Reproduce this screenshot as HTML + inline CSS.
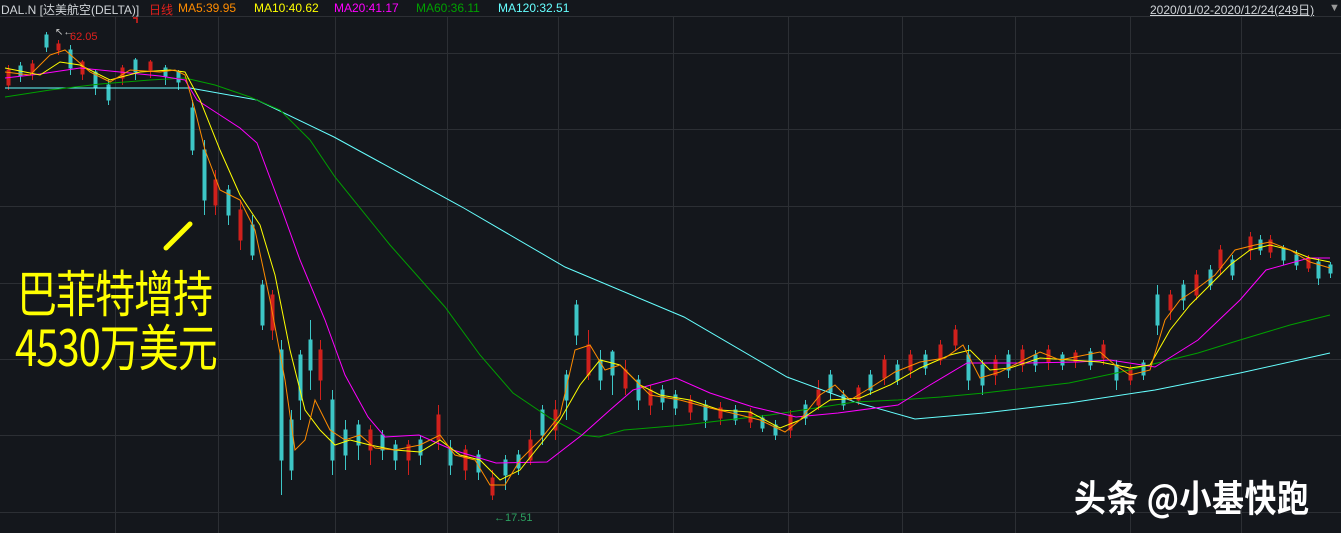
<!DOCTYPE html>
<html><head><meta charset="utf-8">
<style>
html,body{margin:0;padding:0;background:#14171c;width:1341px;height:533px;overflow:hidden;font-family:"Liberation Sans","Noto Sans CJK SC",sans-serif;}
#wrap{position:relative;width:1341px;height:533px;}
.hdr{position:absolute;top:1px;font-size:12px;white-space:nowrap;}
.big{position:absolute;color:#ffff00;font-family:"Noto Sans CJK SC",sans-serif;font-size:40px;line-height:44px;letter-spacing:-1px;transform:scaleY(1.25);transform-origin:0 0;}
.wm{position:absolute;left:1074px;top:470px;color:#fff;font-family:"Noto Sans CJK SC",sans-serif;font-weight:bold;font-size:32px;letter-spacing:0.5px;transform:scaleY(1.15);transform-origin:0 0;white-space:nowrap;}
svg .c{stroke:#3dc6c6;fill:#3dc6c6}
svg .r{stroke:#d0201c;fill:#d0201c}
</style></head><body>
<div id="wrap">
<svg width="1341" height="533" style="position:absolute;left:0;top:0">
<g stroke="#2c2f34" stroke-width="1">
<line x1="0" y1="16.5" x2="1341" y2="16.5"/>
<line x1="0" y1="53.5" x2="1341" y2="53.5"/><line x1="0" y1="129.5" x2="1341" y2="129.5"/><line x1="0" y1="206.5" x2="1341" y2="206.5"/><line x1="0" y1="283.5" x2="1341" y2="283.5"/><line x1="0" y1="359.5" x2="1341" y2="359.5"/><line x1="0" y1="435.5" x2="1341" y2="435.5"/><line x1="0" y1="512.5" x2="1341" y2="512.5"/>
<line x1="115.5" y1="17" x2="115.5" y2="533"/><line x1="218.5" y1="17" x2="218.5" y2="533"/><line x1="335.5" y1="17" x2="335.5" y2="533"/><line x1="447.5" y1="17" x2="447.5" y2="533"/><line x1="558.5" y1="17" x2="558.5" y2="533"/><line x1="673.5" y1="17" x2="673.5" y2="533"/><line x1="788.5" y1="17" x2="788.5" y2="533"/><line x1="902.5" y1="17" x2="902.5" y2="533"/><line x1="1015.5" y1="17" x2="1015.5" y2="533"/><line x1="1130.5" y1="17" x2="1130.5" y2="533"/><line x1="1241.5" y1="17" x2="1241.5" y2="533"/>
</g>
<g stroke-width="1">
<g class="r"><line x1="8.5" y1="65" x2="8.5" y2="90"/><rect x="7" y="70" width="3" height="15"/></g>
<g class="c"><line x1="20.5" y1="62" x2="20.5" y2="82"/><rect x="19" y="66" width="3" height="10"/></g>
<g class="r"><line x1="32.5" y1="60" x2="32.5" y2="80"/><rect x="31" y="64" width="3" height="8"/></g>
<g class="c"><line x1="46.5" y1="32" x2="46.5" y2="52"/><rect x="45" y="35" width="3" height="12"/></g>
<g class="r"><line x1="58.5" y1="40" x2="58.5" y2="55"/><rect x="57" y="44" width="3" height="6"/></g>
<g class="c"><line x1="70.5" y1="45" x2="70.5" y2="75"/><rect x="69" y="50" width="3" height="18"/></g>
<g class="r"><line x1="82.5" y1="60" x2="82.5" y2="80"/><rect x="81" y="62" width="3" height="12"/></g>
<g class="c"><line x1="95.5" y1="70" x2="95.5" y2="95"/><rect x="94" y="72" width="3" height="16"/></g>
<g class="c"><line x1="108.5" y1="80" x2="108.5" y2="105"/><rect x="107" y="85" width="3" height="15"/></g>
<g class="r"><line x1="122.5" y1="65" x2="122.5" y2="85"/><rect x="121" y="68" width="3" height="10"/></g>
<g class="c"><line x1="135.5" y1="58" x2="135.5" y2="80"/><rect x="134" y="60" width="3" height="12"/></g>
<g class="r"><line x1="150.5" y1="60" x2="150.5" y2="78"/><rect x="149" y="62" width="3" height="8"/></g>
<g class="c"><line x1="165.5" y1="65" x2="165.5" y2="85"/><rect x="164" y="68" width="3" height="8"/></g>
<g class="c"><line x1="178.5" y1="70" x2="178.5" y2="90"/><rect x="177" y="72" width="3" height="10"/></g>
<g class="c"><line x1="192.5" y1="100" x2="192.5" y2="155"/><rect x="191" y="108" width="3" height="42"/></g>
<g class="c"><line x1="204.5" y1="140" x2="204.5" y2="215"/><rect x="203" y="150" width="3" height="50"/></g>
<g class="r"><line x1="215.5" y1="170" x2="215.5" y2="215"/><rect x="214" y="180" width="3" height="25"/></g>
<g class="c"><line x1="228.5" y1="185" x2="228.5" y2="225"/><rect x="227" y="190" width="3" height="25"/></g>
<g class="r"><line x1="240.5" y1="200" x2="240.5" y2="250"/><rect x="239" y="210" width="3" height="30"/></g>
<g class="c"><line x1="252.5" y1="215" x2="252.5" y2="260"/><rect x="251" y="225" width="3" height="30"/></g>
<g class="c"><line x1="262.5" y1="280" x2="262.5" y2="330"/><rect x="261" y="285" width="3" height="40"/></g>
<g class="r"><line x1="272.5" y1="290" x2="272.5" y2="340"/><rect x="271" y="295" width="3" height="35"/></g>
<g class="c"><line x1="281.5" y1="340" x2="281.5" y2="495"/><rect x="280" y="350" width="3" height="110"/></g>
<g class="c"><line x1="291.5" y1="410" x2="291.5" y2="480"/><rect x="290" y="420" width="3" height="50"/></g>
<g class="c"><line x1="300.5" y1="350" x2="300.5" y2="420"/><rect x="299" y="355" width="3" height="45"/></g>
<g class="c"><line x1="310.5" y1="320" x2="310.5" y2="390"/><rect x="309" y="340" width="3" height="30"/></g>
<g class="r"><line x1="320.5" y1="340" x2="320.5" y2="400"/><rect x="319" y="350" width="3" height="30"/></g>
<g class="c"><line x1="332.5" y1="390" x2="332.5" y2="475"/><rect x="331" y="400" width="3" height="60"/></g>
<g class="c"><line x1="345.5" y1="420" x2="345.5" y2="470"/><rect x="344" y="430" width="3" height="25"/></g>
<g class="c"><line x1="358.5" y1="420" x2="358.5" y2="460"/><rect x="357" y="425" width="3" height="20"/></g>
<g class="r"><line x1="370.5" y1="425" x2="370.5" y2="465"/><rect x="369" y="430" width="3" height="20"/></g>
<g class="c"><line x1="382.5" y1="430" x2="382.5" y2="460"/><rect x="381" y="435" width="3" height="15"/></g>
<g class="c"><line x1="395.5" y1="440" x2="395.5" y2="470"/><rect x="394" y="445" width="3" height="15"/></g>
<g class="r"><line x1="408.5" y1="440" x2="408.5" y2="475"/><rect x="407" y="445" width="3" height="15"/></g>
<g class="c"><line x1="420.5" y1="435" x2="420.5" y2="465"/><rect x="419" y="440" width="3" height="15"/></g>
<g class="r"><line x1="438.5" y1="405" x2="438.5" y2="450"/><rect x="437" y="415" width="3" height="25"/></g>
<g class="c"><line x1="450.5" y1="440" x2="450.5" y2="475"/><rect x="449" y="448" width="3" height="17"/></g>
<g class="r"><line x1="465.5" y1="445" x2="465.5" y2="480"/><rect x="464" y="450" width="3" height="20"/></g>
<g class="c"><line x1="478.5" y1="450" x2="478.5" y2="480"/><rect x="477" y="455" width="3" height="17"/></g>
<g class="r"><line x1="492.5" y1="470" x2="492.5" y2="500"/><rect x="491" y="478" width="3" height="17"/></g>
<g class="c"><line x1="505.5" y1="455" x2="505.5" y2="490"/><rect x="504" y="460" width="3" height="15"/></g>
<g class="c"><line x1="518.5" y1="450" x2="518.5" y2="475"/><rect x="517" y="455" width="3" height="13"/></g>
<g class="r"><line x1="530.5" y1="430" x2="530.5" y2="465"/><rect x="529" y="440" width="3" height="20"/></g>
<g class="c"><line x1="542.5" y1="405" x2="542.5" y2="445"/><rect x="541" y="410" width="3" height="25"/></g>
<g class="r"><line x1="555.5" y1="400" x2="555.5" y2="440"/><rect x="554" y="410" width="3" height="20"/></g>
<g class="c"><line x1="566.5" y1="370" x2="566.5" y2="420"/><rect x="565" y="375" width="3" height="25"/></g>
<g class="c"><line x1="576.5" y1="300" x2="576.5" y2="345"/><rect x="575" y="305" width="3" height="30"/></g>
<g class="r"><line x1="588.5" y1="330" x2="588.5" y2="380"/><rect x="587" y="345" width="3" height="30"/></g>
<g class="c"><line x1="600.5" y1="350" x2="600.5" y2="390"/><rect x="599" y="360" width="3" height="20"/></g>
<g class="c"><line x1="612.5" y1="350" x2="612.5" y2="395"/><rect x="611" y="352" width="3" height="23"/></g>
<g class="r"><line x1="625.5" y1="360" x2="625.5" y2="395"/><rect x="624" y="370" width="3" height="18"/></g>
<g class="c"><line x1="638.5" y1="375" x2="638.5" y2="410"/><rect x="637" y="380" width="3" height="20"/></g>
<g class="r"><line x1="650.5" y1="385" x2="650.5" y2="415"/><rect x="649" y="390" width="3" height="15"/></g>
<g class="c"><line x1="662.5" y1="385" x2="662.5" y2="410"/><rect x="661" y="390" width="3" height="12"/></g>
<g class="c"><line x1="675.5" y1="390" x2="675.5" y2="415"/><rect x="674" y="395" width="3" height="13"/></g>
<g class="r"><line x1="690.5" y1="395" x2="690.5" y2="420"/><rect x="689" y="400" width="3" height="12"/></g>
<g class="c"><line x1="705.5" y1="400" x2="705.5" y2="428"/><rect x="704" y="405" width="3" height="15"/></g>
<g class="r"><line x1="720.5" y1="402" x2="720.5" y2="425"/><rect x="719" y="408" width="3" height="10"/></g>
<g class="c"><line x1="735.5" y1="405" x2="735.5" y2="425"/><rect x="734" y="410" width="3" height="10"/></g>
<g class="r"><line x1="750.5" y1="408" x2="750.5" y2="428"/><rect x="749" y="412" width="3" height="10"/></g>
<g class="c"><line x1="762.5" y1="415" x2="762.5" y2="432"/><rect x="761" y="418" width="3" height="10"/></g>
<g class="c"><line x1="775.5" y1="420" x2="775.5" y2="440"/><rect x="774" y="425" width="3" height="10"/></g>
<g class="r"><line x1="790.5" y1="410" x2="790.5" y2="438"/><rect x="789" y="415" width="3" height="15"/></g>
<g class="c"><line x1="805.5" y1="400" x2="805.5" y2="425"/><rect x="804" y="405" width="3" height="13"/></g>
<g class="r"><line x1="818.5" y1="380" x2="818.5" y2="410"/><rect x="817" y="390" width="3" height="15"/></g>
<g class="c"><line x1="830.5" y1="370" x2="830.5" y2="400"/><rect x="829" y="375" width="3" height="17"/></g>
<g class="c"><line x1="843.5" y1="390" x2="843.5" y2="410"/><rect x="842" y="395" width="3" height="10"/></g>
<g class="r"><line x1="858.5" y1="385" x2="858.5" y2="405"/><rect x="857" y="388" width="3" height="12"/></g>
<g class="c"><line x1="870.5" y1="370" x2="870.5" y2="395"/><rect x="869" y="375" width="3" height="15"/></g>
<g class="r"><line x1="884.5" y1="355" x2="884.5" y2="385"/><rect x="883" y="360" width="3" height="18"/></g>
<g class="c"><line x1="897.5" y1="360" x2="897.5" y2="385"/><rect x="896" y="365" width="3" height="15"/></g>
<g class="r"><line x1="910.5" y1="350" x2="910.5" y2="378"/><rect x="909" y="355" width="3" height="15"/></g>
<g class="c"><line x1="925.5" y1="350" x2="925.5" y2="375"/><rect x="924" y="355" width="3" height="13"/></g>
<g class="r"><line x1="940.5" y1="340" x2="940.5" y2="365"/><rect x="939" y="345" width="3" height="15"/></g>
<g class="r"><line x1="955.5" y1="325" x2="955.5" y2="350"/><rect x="954" y="330" width="3" height="15"/></g>
<g class="c"><line x1="968.5" y1="345" x2="968.5" y2="390"/><rect x="967" y="355" width="3" height="25"/></g>
<g class="c"><line x1="982.5" y1="360" x2="982.5" y2="395"/><rect x="981" y="365" width="3" height="20"/></g>
<g class="r"><line x1="995.5" y1="355" x2="995.5" y2="385"/><rect x="994" y="360" width="3" height="15"/></g>
<g class="c"><line x1="1008.5" y1="350" x2="1008.5" y2="378"/><rect x="1007" y="355" width="3" height="15"/></g>
<g class="r"><line x1="1022.5" y1="345" x2="1022.5" y2="372"/><rect x="1021" y="350" width="3" height="15"/></g>
<g class="c"><line x1="1035.5" y1="350" x2="1035.5" y2="372"/><rect x="1034" y="355" width="3" height="10"/></g>
<g class="r"><line x1="1048.5" y1="345" x2="1048.5" y2="370"/><rect x="1047" y="350" width="3" height="12"/></g>
<g class="c"><line x1="1062.5" y1="352" x2="1062.5" y2="370"/><rect x="1061" y="355" width="3" height="10"/></g>
<g class="r"><line x1="1075.5" y1="350" x2="1075.5" y2="368"/><rect x="1074" y="353" width="3" height="9"/></g>
<g class="c"><line x1="1090.5" y1="348" x2="1090.5" y2="370"/><rect x="1089" y="352" width="3" height="13"/></g>
<g class="r"><line x1="1103.5" y1="340" x2="1103.5" y2="365"/><rect x="1102" y="345" width="3" height="13"/></g>
<g class="c"><line x1="1116.5" y1="360" x2="1116.5" y2="390"/><rect x="1115" y="365" width="3" height="15"/></g>
<g class="r"><line x1="1130.5" y1="365" x2="1130.5" y2="385"/><rect x="1129" y="368" width="3" height="12"/></g>
<g class="c"><line x1="1143.5" y1="360" x2="1143.5" y2="380"/><rect x="1142" y="363" width="3" height="12"/></g>
<g class="c"><line x1="1157.5" y1="285" x2="1157.5" y2="335"/><rect x="1156" y="295" width="3" height="30"/></g>
<g class="r"><line x1="1170.5" y1="290" x2="1170.5" y2="320"/><rect x="1169" y="295" width="3" height="15"/></g>
<g class="c"><line x1="1183.5" y1="280" x2="1183.5" y2="310"/><rect x="1182" y="285" width="3" height="15"/></g>
<g class="r"><line x1="1196.5" y1="270" x2="1196.5" y2="300"/><rect x="1195" y="275" width="3" height="20"/></g>
<g class="c"><line x1="1210.5" y1="265" x2="1210.5" y2="290"/><rect x="1209" y="270" width="3" height="15"/></g>
<g class="r"><line x1="1220.5" y1="245" x2="1220.5" y2="275"/><rect x="1219" y="250" width="3" height="18"/></g>
<g class="c"><line x1="1232.5" y1="255" x2="1232.5" y2="280"/><rect x="1231" y="260" width="3" height="15"/></g>
<g class="r"><line x1="1250.5" y1="232" x2="1250.5" y2="260"/><rect x="1249" y="237" width="3" height="13"/></g>
<g class="c"><line x1="1260.5" y1="235" x2="1260.5" y2="255"/><rect x="1259" y="240" width="3" height="10"/></g>
<g class="r"><line x1="1270.5" y1="235" x2="1270.5" y2="258"/><rect x="1269" y="240" width="3" height="12"/></g>
<g class="c"><line x1="1283.5" y1="245" x2="1283.5" y2="265"/><rect x="1282" y="248" width="3" height="12"/></g>
<g class="c"><line x1="1296.5" y1="250" x2="1296.5" y2="270"/><rect x="1295" y="255" width="3" height="10"/></g>
<g class="r"><line x1="1308.5" y1="255" x2="1308.5" y2="272"/><rect x="1307" y="258" width="3" height="10"/></g>
<g class="c"><line x1="1318.5" y1="258" x2="1318.5" y2="285"/><rect x="1317" y="262" width="3" height="16"/></g>
<g class="c"><line x1="1330.5" y1="262" x2="1330.5" y2="278"/><rect x="1329" y="265" width="3" height="8"/></g>
</g>
<g fill="none" stroke-width="1">
<path stroke="#66ffff" d="M5 88L190 88L257 100L334 137L462 207L565 267L684 317L787 377L855 402L915 419L984 413L1069 403L1155 390L1240 373L1330 353"/>
<path stroke="#00a000" d="M5 97L50 90L100 84L150 80L185 78L215 85L250 97L280 110L310 140L335 177L390 245L445 307L480 355L513 393L550 418L582 435L599 437L624 430L684 425L770 415L855 402L898 400L941 397L984 393L1069 383L1121 372L1198 353L1240 340L1290 325L1330 315"/>
<path stroke="#ff00ff" d="M5 78L40 74L80 68L120 72L160 76L185 80L197 100L220 115L240 128L257 143L282 210L300 260L325 320L345 375L368 417L385 437L419 435L453 450L496 463L547 462L582 435L610 410L633 390L676 378L710 393L753 407L796 417L838 413L898 405L930 385L967 363L1027 363L1078 362L1110 360L1155 367L1198 340L1240 300L1266 270L1309 258L1330 258"/>
<path stroke="#ffff00" d="M5 68L40 75L60 62L80 65L110 80L140 72L170 70L185 72L200 100L220 150L240 195L260 225L275 275L290 350L305 410L320 430L335 445L350 440L370 445L395 450L420 452L440 440L460 455L480 460L500 480L520 470L540 445L560 420L580 385L600 360L620 365L640 385L660 395L690 400L720 410L750 412L780 428L800 420L830 400L860 398L890 385L920 368L950 355L970 350L990 370L1010 368L1040 358L1070 360L1100 362L1130 368L1150 365L1170 330L1190 305L1210 285L1230 265L1250 250L1270 245L1290 250L1310 258L1330 262"/>
<path stroke="#ff8c00" d="M5 72L30 75L50 55L65 50L90 72L110 82L130 70L160 72L175 70L185 75L195 110L205 150L220 190L240 200L255 230L270 300L285 380L295 450L305 440L315 400L330 430L345 440L360 435L375 448L395 450L420 445L440 435L455 455L475 460L490 485L505 485L520 460L540 440L560 415L575 350L590 345L605 370L620 365L635 380L650 395L680 400L710 408L740 415L760 420L785 432L800 420L820 395L835 385L850 400L870 388L895 372L920 362L945 358L963 345L980 378L1000 372L1020 362L1040 352L1060 360L1080 356L1100 352L1115 365L1130 375L1150 370L1165 320L1180 300L1195 290L1215 275L1235 250L1255 245L1270 242L1290 250L1310 262L1330 268"/>
</g>
<line x1="166" y1="248" x2="190" y2="224" stroke="#ffff00" stroke-width="5" stroke-linecap="round"/>
<text x="70" y="40" fill="#e0201c" font-size="11" font-family="Liberation Sans">62.05</text>
<text x="55" y="35" fill="#ccc" font-size="10" font-family="Liberation Sans">↖←</text>
<text x="494" y="521" fill="#2ca060" font-size="11" font-family="Liberation Sans">←17.51</text>
<path d="M133 18H137V23" fill="none" stroke="#e0201c" stroke-width="1.5"/>
</svg>
<div class="hdr" style="left:1px;color:#d0d4d8">DAL.N [达美航空(DELTA)]</div>
<div class="hdr" style="left:149px;color:#e0201c">日线</div>
<div class="hdr" style="left:178px;color:#ff8c00">MA5:39.95</div>
<div class="hdr" style="left:254px;color:#ffff00">MA10:40.62</div>
<div class="hdr" style="left:334px;color:#ff00ff">MA20:41.17</div>
<div class="hdr" style="left:416px;color:#00a000">MA60:36.11</div>
<div class="hdr" style="left:498px;color:#66ffff">MA120:32.51</div>
<div class="hdr" style="left:1150px;color:#d0d4d8;text-decoration:underline">2020/01/02-2020/12/24(249日)</div>
<div class="hdr" style="left:1329px;top:2px;color:#999;font-size:11px">▼</div>
<div class="big" style="left:17px;top:263px">巴菲特增持</div>
<div class="big" style="left:15px;top:317px">4530万美元</div>
<div class="wm">头条 @小基快跑</div>
</div>
</body></html>
